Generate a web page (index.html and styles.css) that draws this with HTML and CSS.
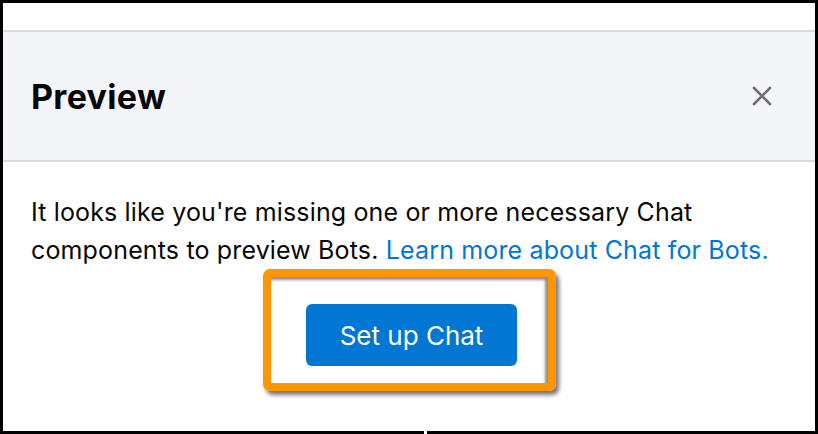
FILE: index.html
```html
<!DOCTYPE html>
<html>
<head>
<meta charset="utf-8">
<link rel="stylesheet" href="styles.css">
</head>
<body>
<div class="frame">
  <div class="top"></div>
  <div class="header">
    <h1 class="title">Preview</h1>
    <button class="close" aria-label="Close">
      <svg width="20" height="20" viewBox="0 0 20 20"><path d="M2 2 L18 18 M18 2 L2 18" stroke="#706e6b" stroke-width="2.6" stroke-linecap="round"/></svg>
    </button>
  </div>
  <div class="content">
    <p class="msg">It looks like you're missing one or more necessary Chat components to preview Bots. <a class="link" href="#">Learn more about Chat for Bots.</a></p>
    <div class="actions">
      <div class="highlight">
        <button class="primary">Set up Chat</button>
      </div>
    </div>
  </div>
  <div class="gap"></div>
</div>
</body>
</html>
```

FILE: styles.css
```css
* { box-sizing: border-box; }
html, body { margin: 0; padding: 0; }
body { width: 818px; height: 434px; background: #fff; font-family: Inter, "Noto Sans", sans-serif; }
.frame {
  position: relative;
  width: 818px;
  height: 434px;
  border: 3px solid #000;
  background: #fff;
  display: flex;
  flex-direction: column;
}
.top { height: 29px; flex: none; border-bottom: 2px solid #dddbda; }
.header {
  height: 130px;
  flex: none;
  background: #f4f5f8;
  border-bottom: 2px solid #dddbda;
  display: flex;
  align-items: center;
  justify-content: space-between;
  padding: 0 43px 0 28px;
}
.title { margin: 0; font-size: 34px; font-weight: 700; color: #080707; letter-spacing: 0.3px; }
.close { background: none; border: 0; padding: 0; display: flex; }
.content { padding: 31px 28px 0 28px; }
.msg { margin: 0; font-size: 25px; line-height: 38px; color: #080707; letter-spacing: 0.15px; }
.link { color: #0176d3; text-decoration: none; }
.actions { display: flex; justify-content: center; }
.highlight {
  margin-left: 1px;
  border: 8px solid #ff9500;
  border-radius: 7px;
  padding: 27px 31px 17px 35px;
  box-shadow: 3px 4px 4px rgba(0,0,0,0.55), inset -3px 3px 3px rgba(0,0,0,0.45);
}
.primary {
  width: 211px;
  height: 62px;
  background: #0176d3;
  color: #fff;
  border: 0;
  border-radius: 6px;
  font-family: Inter, "Noto Sans", sans-serif;
  font-size: 26px;
  display: block;
}
.gap { position: absolute; left: 421px; bottom: -3px; width: 3px; height: 3px; background: #fff; }
```
